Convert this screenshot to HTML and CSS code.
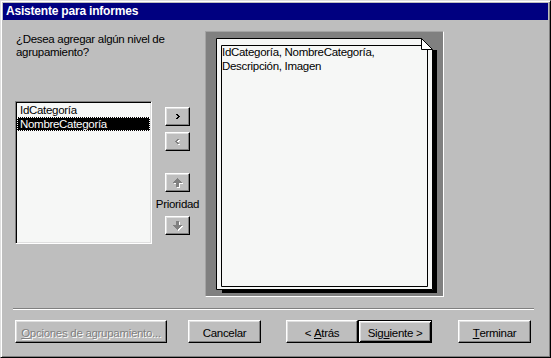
FILE: index.html
```html
<!DOCTYPE html>
<html lang="es">
<head>
<meta charset="utf-8">
<title>Asistente para informes</title>
<link rel="stylesheet" href="styles.css">
</head>
<body>
<div class="window">
  <div class="titlebar">Asistente para informes</div>
  <div class="content">
    <div class="top">
      <div class="left">
        <p class="question">¿Desea agregar algún nivel de<br>agrupamiento?</p>
        <div class="listbox">
          <div class="item">IdCategoría</div>
          <div class="item selected">NombreCategoría</div>
        </div>
      </div>
      <div class="mid">
        <div class="sbtn">
          <svg width="4" height="5" viewBox="0 0 4 5" shape-rendering="crispEdges"><path fill="#000" d="M0 0h2v1h-2zM1 1h2v1h-2zM2 2h2v1h-2zM1 3h2v1h-2zM0 4h2v1h-2z"/></svg>
        </div>
        <div class="sbtn gap-s">
          <svg width="5" height="6" viewBox="0 0 5 6" shape-rendering="crispEdges"><path fill="#fff" transform="translate(1 1)" d="M2 0h2v1h-2zM1 1h2v1h-2zM0 2h2v1h-2zM1 3h2v1h-2zM2 4h2v1h-2z"/><path fill="#808080" d="M2 0h2v1h-2zM1 1h2v1h-2zM0 2h2v1h-2zM1 3h2v1h-2zM2 4h2v1h-2z"/></svg>
        </div>
        <div class="sbtn gap-l">
          <svg width="10" height="10" viewBox="0 0 10 10" shape-rendering="crispEdges"><path fill="#fff" transform="translate(1 1)" d="M4 0h1v1h1v1h1v1h1v1h1v1h-3v4h-3v-4h-3v-1h1v-1h1v-1h1v-1h1z"/><path fill="#808080" d="M4 0h1v1h1v1h1v1h1v1h1v1h-3v4h-3v-4h-3v-1h1v-1h1v-1h1v-1h1z"/></svg>
        </div>
        <div class="prio">Prioridad</div>
        <div class="sbtn">
          <svg width="10" height="10" viewBox="0 0 10 10" shape-rendering="crispEdges"><path fill="#fff" transform="translate(1 1)" d="M3 0h3v4h3v1h-1v1h-1v1h-1v1h-1v1h-1v-1h-1v-1h-1v-1h-1v-1h-1v-1h3z"/><path fill="#808080" d="M3 0h3v4h3v1h-1v1h-1v1h-1v1h-1v1h-1v-1h-1v-1h-1v-1h-1v-1h-1v-1h3z"/></svg>
        </div>
      </div>
      <div class="preview">
        <div class="page">
          <svg class="page-art" width="221" height="255" viewBox="0 0 221 255">
            <rect x="217" y="12" width="4" height="243" fill="#000"/>
            <rect x="6" y="252" width="215" height="3" fill="#000"/>
            <polygon points="0.5,0.5 205.5,0.5 216.5,11.5 216.5,251.5 0.5,251.5" fill="#f6f7f6" stroke="#000"/>
            <polygon points="205.5,0.5 205.5,11.5 216.5,11.5" fill="#fff" stroke="#000" stroke-linejoin="bevel"/>
            <path d="M5.5 7.5H205M211.5 12V248.5H5.5V7.5" fill="none" stroke="#000"/>
          </svg>
          <div class="page-text">IdCategoría, NombreCategoría,<br>Descripción, Imagen</div>
        </div>
      </div>
    </div>
    <div class="sep"></div>
    <div class="buttons">
      <div class="btn disabled w-opc"><span><u>O</u>pciones de agrupamiento...</span></div>
      <div class="btn w-can">Cancelar</div>
      <div class="btn w-atr">&lt;&nbsp;<u>A</u>trás</div>
      <div class="btn default w-sig">Sig<u>u</u>iente&nbsp;&gt;</div>
      <div class="btn w-ter"><u>T</u>erminar</div>
    </div>
  </div>
</div>
</body>
</html>
```

FILE: styles.css
```css
html, body {
  margin: 0;
  padding: 0;
  background: #bebebe;
}

.window {
  width: 551px;
  height: 358px;
  box-sizing: border-box;
  border: 1px solid;
  border-color: #dfdfdf #000 #000 #dfdfdf;
  box-shadow: inset 1px 1px #fff, inset -1px -1px #808080;
  padding: 2px;
  background: #bebebe;
  font-family: "Liberation Sans", Arial, sans-serif;
  font-size: 11.5px;
  letter-spacing: -0.3px;
  color: #000;
}

.titlebar {
  height: 17px;
  line-height: 17px;
  background: #000080;
  color: #fff;
  font-weight: bold;
  font-size: 12px;
  letter-spacing: -0.2px;
  padding-left: 3px;
}

.top {
  display: flex;
  height: 277px;
  padding-left: 12px;
}

.left {
  width: 137px;
  padding-top: 13px;
}

.question {
  margin: 0;
  padding-left: 1px;
  line-height: 13px;
  white-space: nowrap;
}

.listbox {
  margin-top: 42px;
  width: 137px;
  height: 143px;
  box-sizing: border-box;
  border: 1px solid;
  border-color: #808080 #fff #fff #808080;
  box-shadow: inset 1px 1px #000, inset -1px -1px #dfdfdf;
  padding: 1px;
  background: #f6f7f6;
}

.item {
  height: 14px;
  line-height: 14px;
  padding-left: 3px;
  white-space: nowrap;
}

.item.selected {
  background: #000;
  color: #fff;
  outline: 1px dotted #fff;
  outline-offset: -1px;
}

.mid {
  width: 25px;
  margin-left: 13px;
  padding-top: 87px;
  display: flex;
  flex-direction: column;
  align-items: center;
}

.sbtn {
  width: 25px;
  height: 19px;
  box-sizing: border-box;
  background: #bebebe;
  border: 1px solid;
  border-color: #fff #000 #000 #fff;
  box-shadow: inset -1px -1px #808080, inset 1px 1px #dfdfdf;
  display: flex;
  align-items: center;
  justify-content: center;
  flex: none;
}

.sbtn svg {
  display: block;
}

.gap-s {
  margin-top: 6px;
}

.gap-l {
  margin-top: 22px;
}

.prio {
  height: 24px;
  line-height: 24px;
  white-space: nowrap;
}

.preview {
  margin-left: 15px;
  margin-top: 11px;
  width: 239px;
  height: 266px;
  box-sizing: border-box;
  background: #808080;
  border: 1px solid;
  border-color: #a4a4a4 #fff #fff #a4a4a4;
  padding: 6px 0 0 10px;
}

.page {
  position: relative;
  width: 221px;
  height: 255px;
}

.page-art {
  position: absolute;
  left: 0;
  top: 0;
  display: block;
}

.page-text {
  position: relative;
  padding: 7px 0 0 6px;
  line-height: 14px;
  white-space: nowrap;
}

.sep {
  margin: 11px 0 0 10px;
  width: 521px;
  border-top: 1px solid #808080;
  border-bottom: 1px solid #fff;
}

.buttons {
  display: flex;
  margin-top: 10px;
  padding-left: 12px;
}

.btn {
  height: 23px;
  box-sizing: border-box;
  background: #bebebe;
  border: 1px solid;
  border-color: #fff #000 #000 #fff;
  box-shadow: inset -1px -1px #808080, inset 1px 1px #dfdfdf;
  display: flex;
  align-items: center;
  justify-content: center;
  padding-top: 2px;
  white-space: nowrap;
  flex: none;
}

.btn.default {
  border-color: #000;
  box-shadow: inset 1px 1px #fff, inset -1px -1px #000, inset 2px 2px #dfdfdf, inset -2px -2px #808080;
}

.btn.disabled {
  color: #808080;
  text-shadow: 1px 1px 0 #fff;
}

.w-opc { width: 152px; }
.w-can { width: 73px; margin-left: 21px; }
.w-atr { width: 72px; margin-left: 25px; }
.w-sig { width: 74px; }
.w-ter { width: 73px; margin-left: 26px; }
```
